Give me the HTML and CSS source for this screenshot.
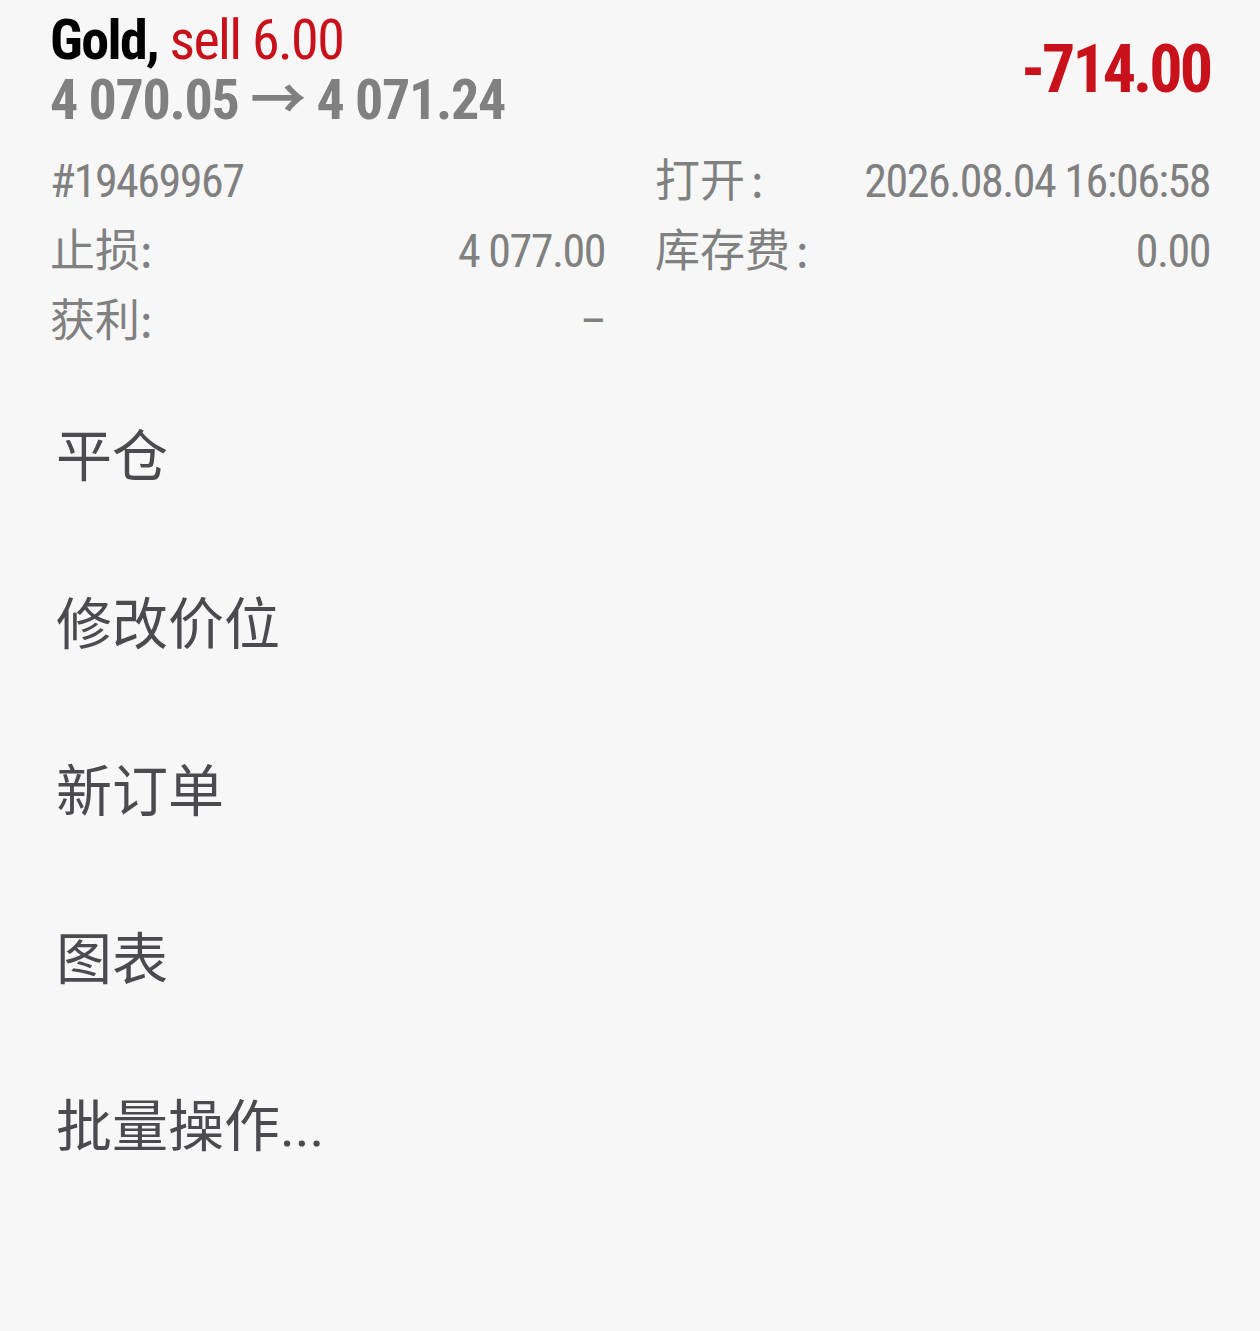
FILE: index.html
```html
<!DOCTYPE html>
<html lang="zh">
<head>
<meta charset="utf-8">
<link rel="stylesheet" href="styles.css">
</head>
<body>
<div class="page">
  <header class="head">
    <div class="title">
      <div class="line1"><span class="sym">Gold,</span> <span class="side">sell 6.00</span></div>
      <div class="line2">4 070.05 → 4 071.24</div>
    </div>
    <div class="profit">-714.00</div>
  </header>
  <section class="details">
    <div class="cell"><span class="lbl">#19469967</span></div>
    <div class="cell"><span class="lbl cjk">打开 :</span><span class="val">2026.08.04 16:06:58</span></div>
    <div class="cell"><span class="lbl cjk">止损:</span><span class="val">4 077.00</span></div>
    <div class="cell"><span class="lbl cjk">库存费 :</span><span class="val">0.00</span></div>
    <div class="cell"><span class="lbl cjk">获利:</span><span class="val">–</span></div>
    <div class="cell"></div>
  </section>
  <nav class="menu">
    <div class="item">平仓</div>
    <div class="item">修改价位</div>
    <div class="item">新订单</div>
    <div class="item">图表</div>
    <div class="item">批量操作...</div>
  </nav>
</div>
</body>
</html>
```
FILE: styles.css
```css
html, body {
  margin: 0;
  padding: 0;
  background: #f7f7f7;
}
body {
  width: 1260px;
  height: 1331px;
  overflow: hidden;
  font-family: "Roboto Condensed", "Liberation Sans Narrow", Roboto, "Noto Sans CJK SC", sans-serif;
  font-stretch: 75%;
}
.page {
  padding: 0 50px;
}
.head {
  display: flex;
  justify-content: space-between;
  align-items: flex-start;
  padding-top: 10px;
}
.title {
  font-size: 56px;
  line-height: 60px;
  font-weight: 700;
  letter-spacing: -1.3px;
}
.line1 { letter-spacing: -1.6px; }
.sym { color: #000; }
.side { color: #c8111a; font-weight: 400; }
.line2 { color: #808080; }
.profit {
  color: #c8111a;
  font-size: 66px;
  font-weight: 700;
  line-height: 70px;
  margin-top: 25px;
  letter-spacing: -3px;
}
.details {
  display: grid;
  grid-template-columns: 1fr 1fr;
  column-gap: 50px;
  margin-top: 16px;
  color: #808080;
  font-size: 46px;
  line-height: 70px;
  letter-spacing: -1.5px;
}
.cell {
  display: flex;
  justify-content: space-between;
  height: 70px;
}
.cjk {
  font-family: "Noto Sans CJK SC", sans-serif;
  font-size: 45px;
  letter-spacing: 0;
  word-spacing: -4px;
  position: relative;
  top: -3px;
}
.menu {
  margin-top: 54px;
  padding-left: 6px;
}
.item {
  font-family: Roboto, "Noto Sans CJK SC", sans-serif;
  font-stretch: 100%;
  color: #4a4a4f;
  font-size: 56px;
  height: 167.5px;
  line-height: 94px;
}
```
